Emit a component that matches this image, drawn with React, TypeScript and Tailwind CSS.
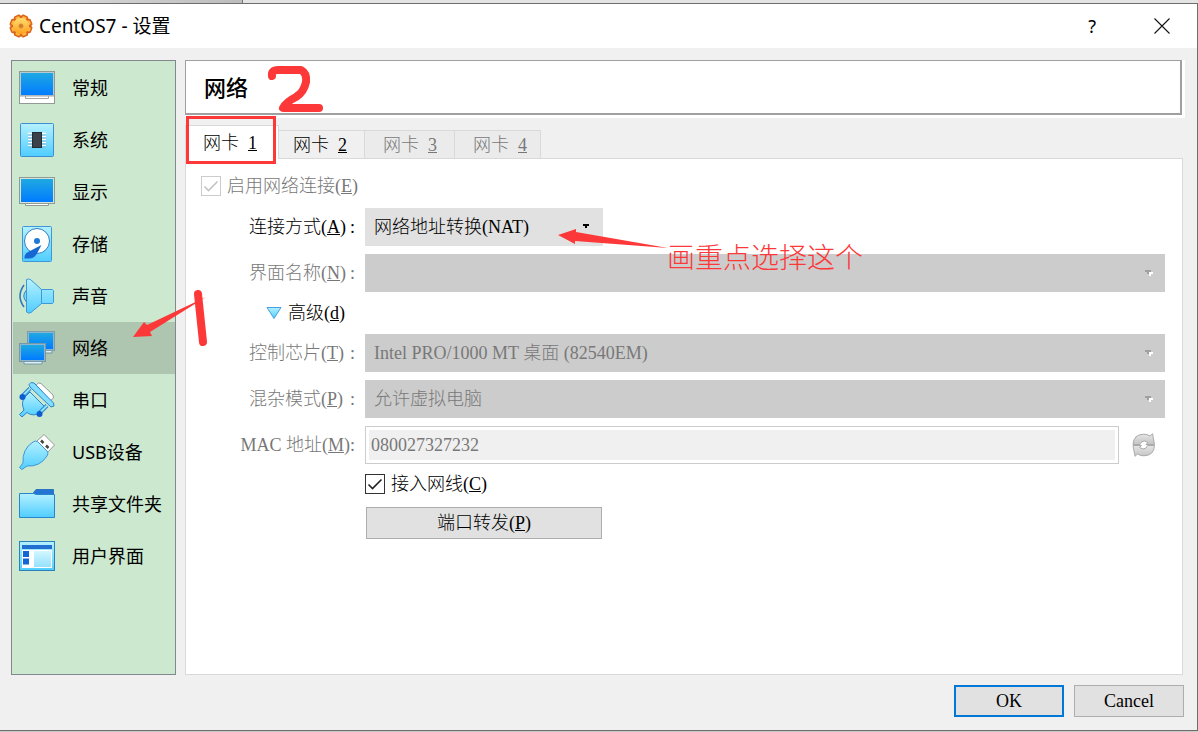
import React, { useState } from 'react';

const RED = '#fc3838';

type IconName =
  | 'general' | 'system' | 'display' | 'storage' | 'audio'
  | 'network' | 'serial' | 'usb' | 'shared' | 'ui';

const categories: { icon: IconName; label: string }[] = [
  { icon: 'general', label: '常规' },
  { icon: 'system', label: '系统' },
  { icon: 'display', label: '显示' },
  { icon: 'storage', label: '存储' },
  { icon: 'audio', label: '声音' },
  { icon: 'network', label: '网络' },
  { icon: 'serial', label: '串口' },
  { icon: 'usb', label: 'USB设备' },
  { icon: 'shared', label: '共享文件夹' },
  { icon: 'ui', label: '用户界面' },
];

// gradients shared by all of the icons
function IconDefs() {
  return (
    <svg className="absolute h-0 w-0" aria-hidden="true">
      <defs>
        <linearGradient id="screen" x1="0" y1="0" x2="0" y2="1">
          <stop offset="0" stopColor="#1fa9e2" />
          <stop offset="1" stopColor="#007bff" />
        </linearGradient>
        <linearGradient id="sky" x1="0" y1="0" x2="0" y2="1">
          <stop offset="0" stopColor="#b5f1ff" />
          <stop offset="1" stopColor="#4fcdff" />
        </linearGradient>
        <linearGradient id="gear" x1="0" y1="0" x2="0" y2="1">
          <stop offset="0" stopColor="#ffdc70" />
          <stop offset="1" stopColor="#ffa01c" />
        </linearGradient>
        <linearGradient id="gray" x1="0" y1="0" x2="0" y2="1">
          <stop offset="0" stopColor="#e6e6e6" />
          <stop offset="1" stopColor="#c4c4c4" />
        </linearGradient>
      </defs>
    </svg>
  );
}

function CategoryIcon({ name }: { name: IconName }) {
  return (
    <svg className="h-9 w-9 shrink-0" viewBox="0 0 36 36" fill="none" aria-hidden="true">
      {name === 'general' && (
        <>
          <rect x="0.500" y="1.500" width="35" height="32" fill="#fff" stroke="#8f9a93" />
          <rect x="1.500" y="2.500" width="33" height="23" fill="url(#screen)" stroke="#b7c9d3" />
          <path d="M1 26h34M6.500 26v2.500h23V26" stroke="#a3a3a3" />
        </>
      )}
      {name === 'system' && (
        <>
          <rect x="1.500" y="1.500" width="33" height="33" rx="1" fill="url(#sky)" stroke="#3f8fd0" />
          <path d="M9 11.500h18M9 14.500h18M9 17.500h18M9 20.500h18M9 23.500h18" stroke="#fff" strokeWidth="1.500" />
          <path d="M9 13h18M9 16h18M9 19h18M9 22h18M9 25h18" stroke="#6fa9c4" strokeWidth="0.700" />
          <rect x="13.500" y="10.500" width="9" height="15" fill="#3a414b" stroke="#222c35" />
        </>
      )}
      {name === 'display' && (
        <>
          <path d="M6.500 28v3.500h23V28" fill="#fff" stroke="#8f9a93" />
          <rect x="0.500" y="3.500" width="35" height="26" fill="#d5e3dd" stroke="#8f9a93" />
          <rect x="2" y="5" width="32" height="23" fill="url(#screen)" />
        </>
      )}
      {name === 'storage' && (
        <>
          <rect x="3.500" y="0.500" width="29" height="35" rx="1" fill="url(#sky)" stroke="#3f97d8" />
          <circle cx="18" cy="15" r="12.500" fill="#fff" stroke="#2d7fc4" />
          <circle cx="18" cy="15" r="3" fill="#1d78d6" />
          <path d="M22.500 19 18 27.500Q15 33 9 32.500H5.500Q5 27.500 10 25.500Z" fill="#1767d2" />
        </>
      )}
      {name === 'audio' && (
        <>
          <path d="M5 7Q-3 18 5 29" stroke="#2c74bd" strokeWidth="1.500" />
          <path d="M7.500 12Q2 18 7.500 24" fill="#7fd9fb" stroke="#3486cc" />
          <path d="M7.500 1.500Q9.500.5 11.500 1.500L22.500 11.500h11l1 1v12l-1 1h-11L12 34.500Q9.500 36 7.500 34Z" fill="url(#sky)" stroke="#3f97d8" />
          <path d="M22.500 11.500v14" stroke="#3f97d8" />
        </>
      )}
      {name === 'network' && (
        <>
          <path d="M26 20v3h7v-3" fill="#dff1fb" stroke="#70949c" />
          <rect x="8.500" y="1.500" width="27" height="19" fill="#8db5d0" stroke="#7c9da5" />
          <rect x="10" y="3" width="24" height="16" fill="url(#screen)" />
          <path d="M5 30v4h18v-4" fill="#dff1fb" stroke="#7699a3" />
          <rect x="0.500" y="13.500" width="26" height="18" fill="#8db5d0" stroke="#7699a3" />
          <rect x="2" y="15" width="23" height="15" fill="url(#screen)" />
        </>
      )}
      {name === 'serial' && (
        <>
          <path d="M17 3 19.500 1 22 1.500 34 13 34.500 16 31 19Z" fill="#fff" stroke="#9a9a9a" />
          <path d="M11 10 27 26 23 30Q14 35.500 8 30.500L3 35 .5 32.500 5 28Q1.500 20 6 15Z" fill="url(#sky)" stroke="#2e83cd" />
          <path d="M3.500 14 11 6.500M20.500 31 28 23.500" stroke="#2e83cd" strokeWidth="4" />
          <path d="M4.500 13 11 6.500M21.500 30 28 23.500" stroke="#8de4ff" strokeWidth="2" />
          <path d="M12 .5 15 1 34.500 21 35 24 32 25 11 5 10 2.500Z" fill="#83dfff" stroke="#2e83cd" />
          <circle cx="3.500" cy="15" r="3" fill="#0c5ed0" />
          <circle cx="20.500" cy="32" r="3" fill="#0c5ed0" />
        </>
      )}
      {name === 'usb' && (
        <>
          <path d="M17 8 25 0.500 35.500 11 28 19Z" fill="#fff" stroke="#999" />
          <path d="M22 6.500 24.500 9M27 11.500 29.500 14" stroke="#444" strokeWidth="2.500" />
          <path d="M14 8Q17 6 19 8L28 17Q30 19 28 22 21 33 8 32L3 35.500.5 33.500 4 29Q3 15 14 8Z" fill="url(#sky)" stroke="#3f97d8" />
        </>
      )}
      {name === 'shared' && (
        <>
          <path d="M13.500 8 17 3.500h17.500V9h-21Z" fill="#2374d3" stroke="#2c74bd" />
          <path d="M0.500 7.500h14l3 1h18v23H.5Z" fill="url(#sky)" stroke="#2785ce" />
        </>
      )}
      {name === 'ui' && (
        <>
          <rect x="0.500" y="3.500" width="35" height="29" fill="url(#sky)" stroke="#2c80ba" />
          <rect x="3" y="7" width="30" height="4" fill="#226fd0" />
          <rect x="3" y="12" width="30" height="18" fill="#fff" />
          <path d="M4 13h6v6H4zM4 20.500h6v6H4z" fill="#1265d5" />
          <rect x="15" y="13" width="17" height="16" fill="url(#sky)" opacity="0.600" />
        </>
      )}
    </svg>
  );
}

function GearIcon() {
  const teeth = [0, 45, 90, 135, 180, 225, 270, 315];
  return (
    <svg className="h-6 w-6" viewBox="0 0 24 24" aria-hidden="true">
      <circle cx="12" cy="12" r="10.500" fill="#d9651a" />
      {teeth.map((a) => (
        <rect key={a} x="8.500" y="0.500" width="7" height="5" rx="1.500" fill="#d9651a" transform={`rotate(${a + 22.5} 12 12)`} />
      ))}
      {teeth.map((a) => (
        <rect key={a} x="9.800" y="2" width="4.400" height="5" rx="1" fill="#ffb540" transform={`rotate(${a + 22.5} 12 12)`} />
      ))}
      <circle cx="12" cy="12" r="8" fill="url(#gear)" />
      <circle cx="12" cy="12" r="2" fill="#e87511" stroke="#c08a4e" />
    </svg>
  );
}

function RefreshIcon() {
  return (
    <svg className="h-6 w-6" viewBox="0 0 24 24" aria-hidden="true">
      <path d="M1 11.500Q1.500 1.500 11.500 1.200 15 1 18 3L20.500.7 22.500 11.500H14L16 9.500 12.500 8Q9 8 8 11.500Z" fill="url(#gray)" stroke="#aaaaaa" strokeLinejoin="round" />
      <path d="M22.500 12.500Q22 22.500 12 22.800 8.500 23 5.500 21L3 23.300 1 12.500H9.500L7.500 14.500 11 16Q14.500 16 15.500 12.500Z" fill="url(#gray)" stroke="#aaaaaa" strokeLinejoin="round" />
    </svg>
  );
}

function Select({ id, value, disabled, className }: { id: string; value: string; disabled?: boolean; className: string }) {
  return (
    <div className={`relative ${className}`}>
      <select
        id={id}
        disabled={disabled}
        defaultValue={value}
        className="h-[38px] w-full appearance-none bg-[#e1e1e1] pr-8 pl-[9px] text-black opacity-100 disabled:bg-[#cccccc] disabled:text-[#787878]"
      >
        <option value={value}>{value}</option>
      </select>
      <svg
        className="pointer-events-none absolute top-4 right-3 h-[6px] w-2"
        viewBox="0 0 8 6"
        shapeRendering="crispEdges"
        aria-hidden="true"
      >
        {disabled && <path d="M3 2h5v2H6v2H4V4H3z" fill="#fff" />}
        <path d="M0 0h6v2H4v2H2V2H0z" fill={disabled ? '#a0a0a0' : '#000'} />
      </svg>
    </div>
  );
}

function FieldLabel({ htmlFor, text, hotkey, disabled }: { htmlFor: string; text: string; hotkey: string; disabled?: boolean }) {
  return (
    <label
      htmlFor={htmlFor}
      className={
        disabled
          ? 'flex min-w-[106px] justify-between justify-self-end whitespace-nowrap text-[#787878]'
          : 'flex min-w-[106px] justify-between justify-self-end whitespace-nowrap'
      }
    >
      <span>{text}(<u>{hotkey}</u>)</span>
      <span>:</span>
    </label>
  );
}

function Check({ id, disabled }: { id: string; disabled?: boolean }) {
  return (
    <span className="relative flex h-5 w-5">
      <input
        id={id}
        type="checkbox"
        defaultChecked
        disabled={disabled}
        className="peer h-5 w-5 appearance-none border border-[#333333] bg-white disabled:border-[#cccccc]"
      />
      <svg
        className="pointer-events-none absolute inset-0 hidden h-5 w-5 text-[#222222] peer-checked:block peer-disabled:text-[#c4c4c4]"
        viewBox="0 0 20 20"
        fill="none"
        aria-hidden="true"
      >
        <path d="M3.500 10.500 7.500 14.500l9-9" stroke="currentColor" strokeWidth="1.600" />
      </svg>
    </span>
  );
}

function TitleBar() {
  return (
    <header className="flex h-11 items-center justify-between bg-white pr-[27px] pl-[9px]">
      <div className="flex items-center gap-[6px]">
        <GearIcon />
        <h1 className="text-[19px] leading-7">CentOS7 - 设置</h1>
      </div>
      <div className="flex items-center gap-[58px]">
        <button className="text-lg" aria-label="帮助">?</button>
        <button aria-label="关闭">
          <svg className="h-4 w-4" viewBox="0 0 16 16" aria-hidden="true">
            <path d="M0.500.5l15 15M15.500.5l-15 15" stroke="#111" strokeWidth="1.100" />
          </svg>
        </button>
      </div>
    </header>
  );
}

function Sidebar() {
  const [active, setActive] = useState<IconName>('network');

  return (
    <nav className="w-[165px] shrink-0 border border-[#828790] bg-[#cce8cf] pt-px pl-px">
      {categories.map(({ icon, label }) => (
        <button
          key={icon}
          onClick={() => setActive(icon)}
          className={
            active === icon
              ? 'flex h-[52px] w-full items-center gap-[17px] bg-[#aec5b0] pl-[6px] text-lg'
              : 'flex h-[52px] w-full items-center gap-[17px] pl-[6px] text-lg'
          }
        >
          <CategoryIcon name={icon} />
          {label}
        </button>
      ))}
    </nav>
  );
}

function Tabs() {
  return (
    <div role="tablist" className="flex items-end">
      <button role="tab" aria-selected="true" className="relative z-10 -mb-px h-[34px] w-[94px] border border-b-0 border-[#d9d9d9] bg-white pl-[17px] text-left">
        网卡 &nbsp;<u>1</u>
        <span className="absolute -top-[10px] left-0 h-12 w-[90px] border-[3px] border-[#fc3838]" />
      </button>
      <button role="tab" className="h-7 w-[86px] border-t border-r border-[#d9d9d9] pl-[14px] text-left">
        网卡 &nbsp;<u>2</u>
      </button>
      <button role="tab" disabled className="h-7 w-[90px] border-t border-r border-[#d9d9d9] bg-[#ebebeb] pl-[18px] text-left text-[#787878]">
        网卡 &nbsp;<u>3</u>
      </button>
      <button role="tab" disabled className="h-7 w-[86px] border-t border-r border-[#d9d9d9] bg-[#ebebeb] pl-[18px] text-left text-[#787878]">
        网卡 &nbsp;<u>4</u>
      </button>
    </div>
  );
}

function AdapterForm() {
  return (
    <div className="flex-1 border border-[#d9d9d9] bg-white pt-4 pr-[17px] pl-[15px]">
      <div className="flex h-[22px] items-center gap-[6px] text-[#787878]">
        <Check id="enable" disabled />
        <label htmlFor="enable">启用网络连接(<u>E</u>)</label>
      </div>

      <div className="mt-[11px] grid grid-cols-[106px_1fr] items-center gap-x-[10px] gap-y-2 pl-12">
        <FieldLabel htmlFor="attached" text="连接方式" hotkey="A" />
        <Select id="attached" value="网络地址转换(NAT)" className="w-[238px]" />

        <FieldLabel htmlFor="iface" text="界面名称" hotkey="N" disabled />
        <Select id="iface" value="" disabled className="w-full" />

        <button className="col-span-2 flex h-[26px] items-center gap-[6px] pl-[17px]">
          <svg className="h-3 w-4" viewBox="0 0 16 12" aria-hidden="true">
            <path d="M1 .5h14L8 11.500z" fill="url(#sky)" stroke="#4a9fe0" />
          </svg>
          <span>高级(<u>d</u>)</span>
        </button>

        <FieldLabel htmlFor="chip" text="控制芯片" hotkey="T" disabled />
        <Select id="chip" value="Intel PRO/1000 MT 桌面 (82540EM)" disabled className="w-full" />

        <FieldLabel htmlFor="promisc" text="混杂模式" hotkey="P" disabled />
        <Select id="promisc" value="允许虚拟电脑" disabled className="w-full" />

        <FieldLabel htmlFor="mac" text="MAC 地址" hotkey="M" disabled />
        <div className="flex items-center gap-[13px] pr-[9px]">
          <div className="flex h-[38px] flex-1 border border-[#cccccc] p-[3px]">
            <input id="mac" disabled defaultValue="080027327232" className="w-full bg-[#f0f0f0] pl-[2px] text-[#787878]" />
          </div>
          <button disabled aria-label="刷新">
            <RefreshIcon />
          </button>
        </div>

        <div className="col-start-2 flex h-6 items-center gap-[6px]">
          <Check id="cable" />
          <label htmlFor="cable">接入网线(<u>C</u>)</label>
        </div>

        <div className="col-start-2 flex pt-[3px] pl-px">
          <button className="h-8 w-[236px] border border-[#adadad] bg-[#e1e1e1]">
            端口转发(<u>P</u>)
          </button>
        </div>
      </div>
    </div>
  );
}

// hand-drawn marks that lie over the dialog
function Annotations() {
  return (
    <div className="pointer-events-none absolute inset-0 z-20">
      <svg className="absolute top-[64px] left-[264px] h-[52px] w-[62px]" viewBox="0 0 62 52" fill="none" aria-hidden="true">
        <path d="M8 12Q7 6 14 6L37 6Q43 9 42 18 40 28 32 33 22 38 19 44L55 44" stroke={RED} strokeWidth="8" strokeLinecap="round" strokeLinejoin="round" />
      </svg>
      <svg className="absolute top-[288px] left-[132px] h-[60px] w-[76px]" viewBox="0 0 76 60" fill="none" aria-hidden="true">
        <path d="M1 49 12 34 15 37 74 9 18 44 20 48Z" fill={RED} />
        <path d="M66 6 71 54" stroke={RED} strokeWidth="8" strokeLinecap="round" />
      </svg>
      <svg className="absolute top-[226px] left-[556px] h-[24px] w-[114px]" viewBox="0 0 114 24" aria-hidden="true">
        <path d="M2 9 20 3 20 6 112 22 19 15 19 18Z" fill={RED} />
      </svg>
      <p className="absolute top-[239px] left-[667px] text-[28px] leading-9 font-light text-[#fc3838]">画重点选择这个</p>
    </div>
  );
}

export default function App() {
  return (
    <div className="relative flex min-h-screen flex-col bg-[#c8c8c8] pb-px font-['Noto_Sans','Noto_Sans_CJK_SC',sans-serif] text-black">
      <IconDefs />
      <div className="flex h-[3px]">
        <div className="w-[243px] border-r border-[#777777] bg-linear-to-r from-[#e0e0e0] to-[#bdbdbd]" />
        <div className="flex-1 bg-[#e4e4e4]" />
      </div>

      <div className="flex flex-1 flex-col border-t border-r border-b border-[#6e6e6e] bg-[#f0f0f0]">
        <TitleBar />

        <div className="flex flex-1 gap-[9px] pt-3 pr-3 pl-[11px]">
          <Sidebar />
          <main className="flex flex-1 flex-col">
            <div className="bg-white pr-[3px] pb-[3px]">
              <h2 className="flex h-[55px] items-center border border-r-2 border-b-2 border-[#a0a0a0] pl-[18px] text-[22px] font-medium">
                网络
              </h2>
            </div>
            <div className="flex flex-1 flex-col pt-[7px] pr-[2px] font-['Liberation_Serif','Noto_Sans_CJK_SC',serif] text-lg font-light">
              <Tabs />
              <AdapterForm />
            </div>
          </main>
        </div>

        <footer className="flex justify-end gap-[10px] pt-[10px] pr-[13px] pb-[13px] font-['Liberation_Serif','Noto_Sans_CJK_SC',serif] text-lg">
          <button className="h-8 w-[110px] border-2 border-[#0078d7] bg-[#e1e1e1]">OK</button>
          <button className="h-8 w-[110px] border border-[#adadad] bg-[#e1e1e1]">Cancel</button>
        </footer>
      </div>

      <Annotations />
    </div>
  );
}
